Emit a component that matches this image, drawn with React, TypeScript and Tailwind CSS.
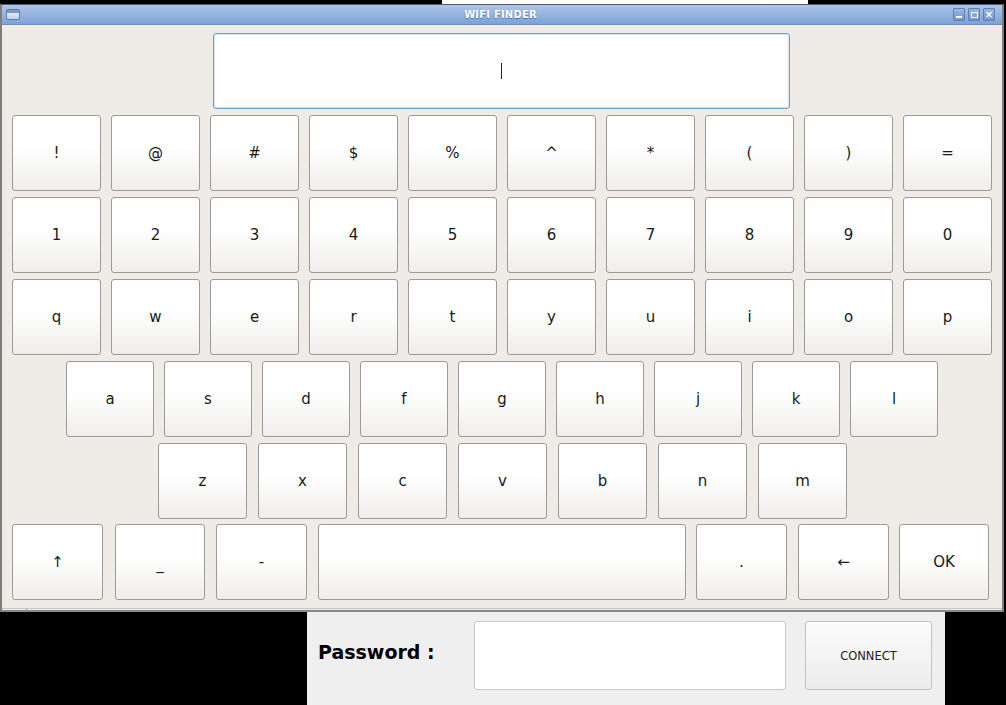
const font = { fontFamily: '"DejaVu Sans", Verdana, sans-serif' };

type K = { label: string; w: number; ml: number };

const row = (labels: string[], first: number, w: number, gap: number): K[] =>
  labels.map((label, i) => ({ label, w, ml: i === 0 ? first : gap }));

const rows: { top: number; keys: K[] }[] = [
  { top: 6, keys: row(['!', '@', '#', '$', '%', '^', '*', '(', ')', '='], 10, 89, 10) },
  { top: 6, keys: row(['1', '2', '3', '4', '5', '6', '7', '8', '9', '0'], 10, 89, 10) },
  { top: 6, keys: row(['q', 'w', 'e', 'r', 't', 'y', 'u', 'i', 'o', 'p'], 10, 89, 10) },
  { top: 6, keys: row(['a', 's', 'd', 'f', 'g', 'h', 'j', 'k', 'l'], 64, 88, 10) },
  { top: 6, keys: row(['z', 'x', 'c', 'v', 'b', 'n', 'm'], 156, 89, 11) },
  {
    top: 5,
    keys: [
      { label: '↑', w: 91, ml: 10 },
      { label: '_', w: 90, ml: 12 },
      { label: '-', w: 91, ml: 11 },
      { label: '', w: 368, ml: 11 },
      { label: '.', w: 91, ml: 10 },
      { label: '←', w: 91, ml: 11 },
      { label: 'OK', w: 90, ml: 10 },
    ],
  },
];

function Key({ k }: { k: K }) {
  return (
    <div
      className="h-[76px] shrink-0 flex items-center justify-center rounded-[3px] border border-[#9c9a97] bg-gradient-to-b from-white from-40% to-[#efeeec] text-[15px] text-[#1a1a1a]"
      style={{ width: k.w, marginLeft: k.ml }}
    >
      {k.label === '_' ? <span className="mt-[4px]">_</span> : k.label}
    </div>
  );
}

export default function App() {
  return (
    <div className="w-[1006px] h-[705px] bg-black flex flex-col overflow-hidden" style={font}>
      {/* desktop strip behind window */}
      <div className="h-[4px] flex shrink-0">
        <div className="w-[442px] bg-black" />
        <div className="w-[366px] bg-white" />
        <div className="flex-1 bg-black" />
      </div>
      {/* window */}
      <div className="w-[1004px] h-[608px] shrink-0 flex flex-col border-x-[2px] border-[#7d7d7d] border-t border-t-[#5a5a5a] bg-[#efebe7]">
        <div className="h-[20px] shrink-0 flex items-center px-[4px] bg-gradient-to-b from-[#aec6e9] to-[#7ea2d5] border-b border-[#6b8ec2]">
          <div className="flex-1 flex">
            <div className="w-[14px] h-[11px] rounded-[2px] border border-[#5d7eae] bg-gradient-to-b from-[#f4f6fa] to-[#c4d0e2] flex flex-col">
              <div className="h-[3px] bg-[#7b98c4]" />
            </div>
          </div>
          <div className="text-[10px] font-bold text-white tracking-[0.2px] [text-shadow:0_1px_1px_#4f6f9e]">WIFI FINDER</div>
          <div className="flex-1 flex justify-end gap-[3px] pr-[3px]">
            {['min', 'max', 'close'].map((b) => (
              <div key={b} className="w-[12px] h-[13px] rounded-[1px] border border-[#5f80b0] bg-gradient-to-b from-[#9db8df] to-[#7295c8] flex items-center justify-center">
                {b === 'min' && <div className="w-[6px] h-[2px] bg-white mt-[5px]" />}
                {b === 'max' && <div className="w-[7px] h-[6px] border-[1.5px] border-white" />}
                {b === 'close' && <div className="text-white text-[10px] font-bold leading-none">×</div>}
              </div>
            ))}
          </div>
        </div>
        <div className="flex-1 flex flex-col">
          <div className="ml-[211px] mt-[8px] w-[577px] h-[76px] rounded-[3px] border border-[#6f9fcc] bg-white flex items-center justify-center shadow-[inset_0_0_0_1px_#d6e4f2]">
            <div className="w-[1px] h-[16px] bg-[#222]" />
          </div>
          {rows.map((r, i) => (
            <div key={i} className="flex" style={{ marginTop: r.top }}>
              {r.keys.map((k, j) => (
                <Key key={j} k={k} />
              ))}
            </div>
          ))}
          <div className="mt-auto h-[4px] border-t border-[#c9c5c0] border-b-[2px] border-b-[#8c8a88] flex">
            <div className="ml-[24px] w-[1px] bg-[#8c8a88]" />
          </div>
        </div>
      </div>
      {/* bottom panel */}
      <div className="flex-1 flex">
        <div className="w-[307px] bg-black" />
        <div className="w-[638px] bg-[#efefef] flex items-start pt-[9px]">
          <div className="ml-[11px] mt-[17px] text-[19px] font-bold text-black w-[156px]">Password :</div>
          <div className="w-[312px] h-[69px] bg-white rounded-[3px] border border-[#c9c9c9]" />
          <div className="ml-[19px] w-[127px] h-[69px] pt-[3px] rounded-[3px] border border-[#c3c3c3] bg-gradient-to-b from-[#fbfbfb] to-[#ececec] flex items-center justify-center text-[11.5px] text-[#222]">
            CONNECT
          </div>
        </div>
        <div className="flex-1 bg-black" />
      </div>
    </div>
  );
}
